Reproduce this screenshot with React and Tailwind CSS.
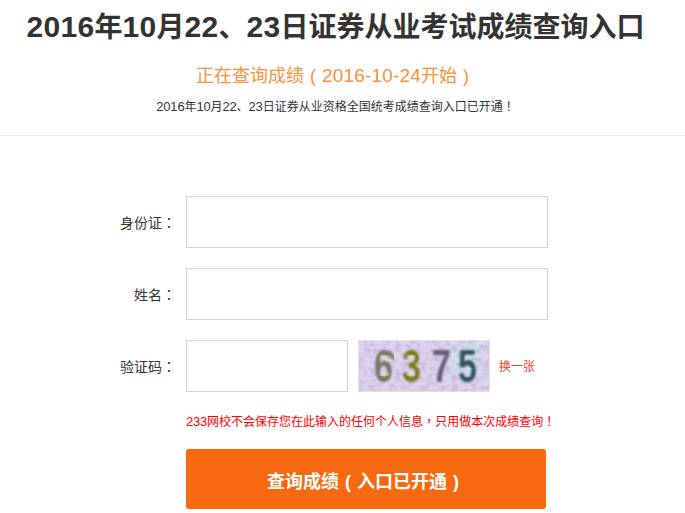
import React from "react";

const font = { fontFamily: '"Liberation Sans", "Noto Sans CJK SC", sans-serif' };
const tc = { fontFamily: '"Noto Sans CJK TC", sans-serif' };

// Latin runs are a little larger in the reference; full-width punctuation is centred in its cell.
function T({ children, latin = "" }) {
  const parts = children.split(/([0-9-]+|[，！（）：])/).filter(Boolean);
  return parts.map((p, i) => {
    if (/^[0-9-]+$/.test(p)) return <span key={i} className={latin}>{p}</span>;
    if (p === "（") return <span key={i} className="inline-block w-[1em] text-center">(</span>;
    if (p === "）") return <span key={i} className="inline-block w-[1em] text-center">)</span>;
    if (/^[，！：]$/.test(p)) return <span key={i} style={tc}>{p}</span>;
    return <span key={i}>{p}</span>;
  });
}

function Digit({ x, y, fill, children }) {
  return (
    <text transform={`translate(${x} ${y}) scale(0.74 1)`} fill={fill}>{children}</text>
  );
}

function Captcha() {
  return (
    <svg width="132" height="52" viewBox="0 0 132 52" className="block">
      <defs>
        <filter id="noise" x="0" y="0" width="100%" height="100%">
          <feTurbulence type="fractalNoise" baseFrequency="0.16 0.22" numOctaves="3" seed="11" />
          <feColorMatrix values="0 0 0 0 0.58  0 0 0 0 0.48  0 0 0 0 0.74  0 0 0 2.6 -1.05" />
        </filter>
        <filter id="soft"><feGaussianBlur stdDeviation="1" /></filter>
      </defs>
      <rect width="132" height="52" fill="#dcd4ee" />
      <rect x="92" y="0" width="32" height="34" fill="#cfe4ee" opacity="0.8" filter="url(#soft)" />
      <rect width="132" height="52" filter="url(#noise)" />
      <g filter="url(#soft)" fontFamily="Liberation Sans, sans-serif" fontWeight="700" fontSize="46">
        <Digit x={16} y={42} fill="#77745f">6</Digit>
        <Digit x={44} y={42} fill="#7b7a1e">3</Digit>
        <Digit x={74} y={42} fill="#645d78">7</Digit>
        <Digit x={100} y={42} fill="#2f545e">5</Digit>
      </g>
      <path d="M30 12q5 2 5 7" stroke="#77745f" strokeWidth="3.5" fill="none" filter="url(#soft)" />
      <path d="M22 17h9M22 34h9M49 17h8M49 34h8" stroke="#e6e4cf" strokeWidth="3.5" opacity="0.7" filter="url(#soft)" />
      <path d="M106 29h8M106 36h6" stroke="#cfe6e8" strokeWidth="3" opacity="0.55" filter="url(#soft)" />
      <rect x="0.5" y="0.5" width="131" height="51" fill="none" stroke="#e2e2e2" />
    </svg>
  );
}

function Row({ label, children }) {
  return (
    <div className="flex items-center h-[52px] mb-5">
      <label className="w-[176px] shrink-0 pt-[1px] text-right text-[14px] text-[#333] leading-5 whitespace-nowrap"><T>{label}</T></label>
      <div className="ml-[10px] flex items-center">{children}</div>
    </div>
  );
}

const inputCls = "block h-[52px] bg-white border border-[#d5d5d5] shadow-[inset_0_0_3px_rgba(0,0,0,0.06)] outline-none";

export default function App() {
  return (
    <div style={font} className="w-[685px] h-[513px] overflow-hidden bg-white">
      <header className="h-[136px] pr-[14px] border-b border-[#eeeeee] flex flex-col items-center">
        <h1 className="mt-[7px] h-[40px] leading-[40px] text-[28px] font-bold text-[#333] whitespace-nowrap">
          <T latin="text-[30px] tracking-[0.3px]">2016年10月22、23日证券从业考试成绩查询入口</T>
        </h1>
        <p className="mt-[15px] h-[28px] leading-[28px] text-[18px] text-[#f79240] whitespace-nowrap">
          <T latin="text-[19px] tracking-[0.2px]">正在查询成绩（2016-10-24开始）</T>
        </p>
        <p className="mt-[6px] h-[20px] leading-[20px] text-[12px] text-[#333] whitespace-nowrap">
          <T latin="text-[13px] tracking-[-0.2px]">2016年10月22、23日证券从业资格全国统考成绩查询入口已开通！</T>
        </p>
      </header>
      <form className="pt-[60px]">
        <Row label="身份证："><input className={`${inputCls} w-[362px]`} /></Row>
        <Row label="姓名："><input className={`${inputCls} w-[362px]`} /></Row>
        <Row label="验证码：">
          <input className={`${inputCls} w-[162px]`} />
          <div className="ml-[10px]"><Captcha /></div>
          <a className="ml-[9px] pt-[2px] text-[12px] text-[#e8451f]">换一张</a>
        </Row>
        <div className="ml-[186px]">
          <p className="h-[18px] leading-[18px] text-[12px] text-[#ff0000] whitespace-nowrap">
            <T latin="text-[13px] tracking-[-0.2px]">233网校不会保存您在此输入的任何个人信息，只用做本次成绩查询！</T>
          </p>
          <button type="button" className="mt-[19px] block w-[360px] h-[60px] pt-[6px] rounded-[3px] bg-[#f7690e] text-white text-[18px] font-bold">
            <T>查询成绩（入口已开通）</T>
          </button>
        </div>
      </form>
    </div>
  );
}
